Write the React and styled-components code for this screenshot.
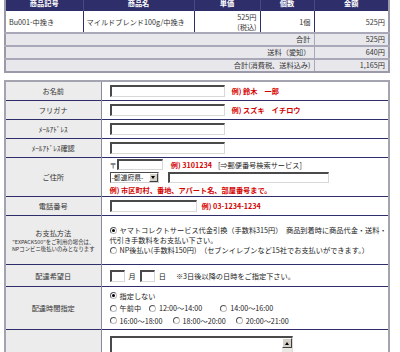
import React from 'react';
import styled, { createGlobalStyle } from 'styled-components';

const Global = createGlobalStyle`
  html, body { margin: 0; padding: 0; background: #fff; }
  body {
    font-family: "Noto Sans CJK JP", "Liberation Sans", sans-serif;
    font-size: 7.2px;
    color: #222;
  }
  #root { width: 400px; height: 352px; overflow: hidden; }
`;

const Page = styled.div`
  padding-left: 4px;
  margin-top: -4px;
`;

const OrderTable = styled.table`
  width: 386px;
  table-layout: fixed;
  border-collapse: collapse;
  border-left: 2px solid #9a9aa8;
  border-right: 2px solid #9a9aa8;
  border-bottom: 2px solid #9a9aa8;
`;

const HeadCell = styled.th`
  background: #2e2e6a;
  color: #fff;
  font-weight: bold;
  height: 14px;
  padding: 0;
  line-height: 14px;
  text-align: center;
  border-left: 1px solid #4a4a80;
`;

const ItemCell = styled.td`
  height: 21px;
  padding: 0 3px;
  border: 1px solid #2e2e6a;
  text-align: ${p => (p.$right ? 'right' : 'left')};
  line-height: 10px;
  vertical-align: middle;
  background: #fff;
  color: #333;
`;

const SumCell = styled.td`
  height: 11px;
  padding: 0 3px;
  background: #e8e8ec;
  border-top: 2px solid #a8a8b8;
  border-left: ${p => (p.$value ? '1px solid #a8a8b8' : 'none')};
  text-align: right;
  line-height: 11px;
  color: #333;
`;

const FormTable = styled.table`
  margin-top: 7px;
  width: 386px;
  table-layout: fixed;
  border-collapse: collapse;
  border: 2px solid #a4a4b0;
`;

const Label = styled.th`
  width: 95px;
  height: ${p => p.$h}px;
  background: #ececec;
  font-weight: normal;
  color: #333;
  text-align: center;
  padding: 0;
  border-top: 1px solid #2e2e6a;
  border-right: 1px solid #8a8a9a;
  line-height: 10px;
`;

const Note = styled.div`
  font-size: 5.4px;
  line-height: 7px;
  white-space: nowrap;
`;

const LabelMain = styled.div`
  margin-bottom: 1px;
`;

const Value = styled.td`
  padding: 0 0 0 8px;
  border-top: 1px solid #2e2e6a;
  vertical-align: ${p => (p.$top ? 'top' : 'middle')};
  padding-top: ${p => (p.$top ? '3px' : '0')};
  color: #222;
  line-height: 10px;
  white-space: nowrap;
`;

const Line = styled.div`
  display: flex;
  align-items: center;
  gap: ${p => p.$gap ?? 6}px;
  height: ${p => p.$h || 10}px;
`;

const Field = styled.input`
  box-sizing: border-box;
  width: ${p => p.$w}px;
  height: ${p => p.$h || 12}px;
  padding: 0;
  margin: 0;
  border-style: solid;
  border-width: 2px 1px 1px 2px;
  border-color: #4a4a4a #d8d8d8 #d8d8d8 #4a4a4a;
  background: #fff;
  flex: none;
`;

const Example = styled.span`
  color: #d40000;
  font-weight: bold;
  margin-left: ${p => p.$ml || 0}px;
`;

const Plain = styled.span`
  margin-left: ${p => p.$ml || 0}px;
`;

const Select = styled.span`
  box-sizing: border-box;
  display: inline-flex;
  align-items: center;
  justify-content: space-between;
  width: 49px;
  height: 11px;
  border-style: solid;
  border-width: 1px;
  border-color: #4a4a4a #d0d0d0 #d0d0d0 #4a4a4a;
  padding-left: 1px;
  font-size: 6.8px;
  flex: none;
`;

const SelectArrow = styled.span`
  box-sizing: border-box;
  width: 9px;
  height: 9px;
  background: #d4d0c8;
  border: 1px solid;
  border-color: #fff #404040 #404040 #fff;
  display: flex;
  align-items: center;
  justify-content: center;
  &::before {
    content: '';
    border-left: 2.5px solid transparent;
    border-right: 2.5px solid transparent;
    border-top: 3px solid #000;
  }
`;

const Radio = styled.span`
  box-sizing: border-box;
  display: inline-flex;
  align-items: center;
  justify-content: center;
  width: 7px;
  height: 7px;
  border-radius: 50%;
  border: 1px solid;
  border-color: #555 #bbb #bbb #555;
  background: #fff;
  margin-right: 3px;
  flex: none;
  &::after {
    content: '';
    display: ${p => (p.$checked ? 'block' : 'none')};
    width: 3px;
    height: 3px;
    border-radius: 50%;
    background: #000;
  }
`;

const Choice = styled.span`
  display: inline-flex;
  align-items: center;
  margin-right: ${p => p.$mr || 0}px;
`;

const Memo = styled.div`
  box-sizing: border-box;
  width: 183px;
  height: 30px;
  margin-top: 3px;
  border-style: solid;
  border-width: 2px 1px 1px 2px;
  border-color: #4a4a4a #d8d8d8 #d8d8d8 #4a4a4a;
  display: flex;
  justify-content: flex-end;
`;

const ScrollTrack = styled.div`
  width: 10px;
  background: #ebe9e4;
  display: flex;
  flex-direction: column;
`;

const ScrollButton = styled.div`
  box-sizing: border-box;
  width: 10px;
  height: 10px;
  background: #d4d0c8;
  border: 1px solid;
  border-color: #fff #404040 #404040 #fff;
  display: flex;
  align-items: center;
  justify-content: center;
  &::before {
    content: '';
    border-left: 2.5px solid transparent;
    border-right: 2.5px solid transparent;
    border-bottom: 3px solid #000;
  }
`;

const items = [
  { code: 'Bu001-中挽き', name: 'マイルドブレンド100g/中挽き', qty: '1個', total: '525円' },
];

const sums = [
  ['合計', '525円'],
  ['送料（愛知）', '640円'],
  ['合計(消費税、送料込み)', '1,165円'],
];

const SimpleRow = ({ label, w, example }) => (
  <tr>
    <Label $h={18}>{label}</Label>
    <Value>
      <Line $gap={7}>
        <Field $w={w} />
        {example && <Example>{example}</Example>}
      </Line>
    </Value>
  </tr>
);

export default function App() {
  return (
    <>
      <Global />
      <Page>
        <OrderTable>
          <colgroup>
            <col style={{ width: 78 }} />
            <col style={{ width: 111 }} />
            <col style={{ width: 66 }} />
            <col style={{ width: 54 }} />
            <col style={{ width: 75 }} />
          </colgroup>
          <thead>
            <tr>
              <HeadCell>商品記号</HeadCell>
              <HeadCell>商品名</HeadCell>
              <HeadCell>単価</HeadCell>
              <HeadCell>個数</HeadCell>
              <HeadCell>金額</HeadCell>
            </tr>
          </thead>
          <tbody>
            {items.map(it => (
              <tr key={it.code}>
                <ItemCell>{it.code}</ItemCell>
                <ItemCell>{it.name}</ItemCell>
                <ItemCell $right>525円<br />(税込)</ItemCell>
                <ItemCell $right>{it.qty}</ItemCell>
                <ItemCell $right>{it.total}</ItemCell>
              </tr>
            ))}
            {sums.map(([k, v]) => (
              <tr key={k}>
                <SumCell colSpan={4}>{k}</SumCell>
                <SumCell $value>{v}</SumCell>
              </tr>
            ))}
          </tbody>
        </OrderTable>

        <FormTable>
          <colgroup>
            <col style={{ width: 96 }} />
            <col />
          </colgroup>
          <tbody>
            <SimpleRow label="お名前" w={115} example="例) 鈴木　一郎" />
            <SimpleRow label="フリガナ" w={115} example="例) スズキ　イチロウ" />
            <SimpleRow label="ﾒｰﾙｱﾄﾞﾚｽ" w={115} />
            <SimpleRow label="ﾒｰﾙｱﾄﾞﾚｽ確認" w={115} />
            <tr>
              <Label $h={38}>ご住所</Label>
              <Value>
                <Line $h={12} $gap={0}>
                  <span>〒</span>
                  <Field $w={46} $h={11} />
                  <Example $ml={8}>例) 3101234</Example>
                  <Plain $ml={6}>[⇒郵便番号検索サービス]</Plain>
                </Line>
                <Line $h={13} $gap={9}>
                  <Select>-都道府県-<SelectArrow /></Select>
                  <Field $w={161} $h={11} />
                </Line>
                <Line $h={12}>
                  <Example>例) 市区町村、番地、アパート名、部屋番号まで。</Example>
                </Line>
              </Value>
            </tr>
            <tr>
              <Label $h={18}>電話番号</Label>
              <Value>
                <Line $gap={5}>
                  <Field $w={87} />
                  <Example>例) 03-1234-1234</Example>
                </Line>
              </Value>
            </tr>
            <tr>
              <Label $h={48}>
                <LabelMain>お支払方法</LabelMain>
                <Note>"EXPACK500"をご利用の場合は、</Note>
                <Note>NPコンビニ後払いのみとなります</Note>
              </Label>
              <Value>
                <Line>
                  <Choice><Radio $checked />ヤマトコレクトサービス代金引換（手数料315円）　商品到着時に商品代金・送料・</Choice>
                </Line>
                <Line>代引き手数料をお支払い下さい。</Line>
                <Line>
                  <Choice><Radio />NP後払い(手数料150円)　（セブンイレブンなど15社でお支払いができます。）</Choice>
                </Line>
              </Value>
            </tr>
            <tr>
              <Label $h={21}>配達希望日</Label>
              <Value>
                <Line $gap={4}>
                  <Field $w={15} />
                  <span>月</span>
                  <Field $w={15} />
                  <span>日</span>
                  <Plain $ml={6}>※3日後以降の日時をご指定下さい。</Plain>
                </Line>
              </Value>
            </tr>
            <tr>
              <Label $h={42}>配達時間指定</Label>
              <Value>
                <Line $h={12.5}>
                  <Choice><Radio $checked />指定しない</Choice>
                </Line>
                <Line $h={12.5} $gap={0}>
                  <Choice $mr={8}><Radio />午前中</Choice>
                  <Choice $mr={18}><Radio />12:00〜14:00</Choice>
                  <Choice><Radio />14:00〜16:00</Choice>
                </Line>
                <Line $h={12.5} $gap={0}>
                  <Choice $mr={10}><Radio />16:00〜18:00</Choice>
                  <Choice $mr={10}><Radio />18:00〜20:00</Choice>
                  <Choice><Radio />20:00〜21:00</Choice>
                </Line>
              </Value>
            </tr>
            <tr>
              <Label $h={40}></Label>
              <Value $top>
                <Memo>
                  <ScrollTrack>
                    <ScrollButton />
                  </ScrollTrack>
                </Memo>
              </Value>
            </tr>
          </tbody>
        </FormTable>
      </Page>
    </>
  );
}
